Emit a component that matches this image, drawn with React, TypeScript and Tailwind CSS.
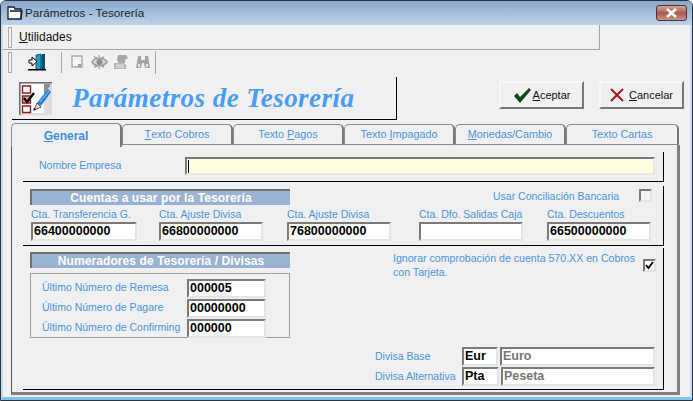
import type { ReactNode } from "react";

const LABEL = "text-[10.5px] leading-[14px] text-[#4a94d8] whitespace-nowrap";

function Grip() {
  return <div className="ml-[5px] h-[21px] w-[4px] shrink-0 border border-[#a8a8a8] bg-[#f4f4f4]" />;
}

/** Sunken win32 edit box: dark top/left, pale bottom/right. */
function Field({ value, className = "", muted = false }: { value?: string; className?: string; muted?: boolean }) {
  return (
    <div
      className={`flex h-[19px] shrink-0 items-center border-2 border-t-[#7a7a7a] border-l-[#7a7a7a] border-r-[#e4e4e4] border-b-[#e4e4e4] bg-white pl-[1px] text-[12.5px] font-bold leading-none ${
        muted ? "text-[#777777]" : "text-black"
      } ${className}`}
    >
      {value}
    </div>
  );
}

function Band({ children, className = "" }: { children: ReactNode; className?: string }) {
  return (
    <div
      className={`flex h-[16px] w-[260px] shrink-0 items-center justify-center border-l-2 border-t-2 border-l-[#707070] border-t-[#707070] bg-[#9ab3d2] text-[12px] font-bold leading-none tracking-[0.1px] text-white ${className}`}
    >
      {children}
    </div>
  );
}

function Tab({ before = "", u, rest, active = false, width }: { before?: string; u: string; rest: string; active?: boolean; width: string }) {
  return (
    <div
      className={`flex shrink-0 items-center justify-center whitespace-pre rounded-t-[5px] border-l border-t border-r-2 border-l-[#8a8a8a] border-t-[#8a8a8a] border-r-[#777777] leading-none ${width} ${
        active
          ? "z-10 h-[24px] bg-[#f0f0f2] text-[12px] font-bold text-[#3f8fd8]"
          : "mt-[1px] h-[21px] border-b border-b-[#8a8a8a] text-[10.8px] text-[#4a94d8]"
      }`}
    >
      <span>{before}</span>
      <span className="underline">{u}</span>
      <span>{rest}</span>
    </div>
  );
}

function Door() {
  return (
    <svg width="18" height="18" viewBox="0 0 18 18" className="ml-[16px] shrink-0">
      <path d="M8 2h8v14H8z" fill="#1b7f9c" />
      <path d="M8 2l5-1v15l-5 1z" fill="#1a9cc4" stroke="#0b3d4d" strokeWidth="0.7" />
      <path d="M14 1h3v15h-3z" fill="#0d4f63" />
      <path d="M1 7h3V4l5 4.5L4 13v-3H1z" fill="#fff" stroke="#000" strokeWidth="1" />
      <path d="M0 16h18v1.5H0z" fill="#000" />
    </svg>
  );
}

function DisabledIcons() {
  return (
    <div className="flex items-center">
      <svg width="12" height="14" viewBox="0 0 12 14" className="ml-[9px]">
        <path d="M1 1h10v11H1z" fill="#f4f4f4" stroke="#a9a9a9" strokeWidth="1.4" />
        <path d="M7 9h3v3H7z" fill="#9a9a9a" />
      </svg>
      <svg width="17" height="16" viewBox="0 0 17 16" className="ml-[8px]">
        <path d="M1 8c3-5 12-5 15 0-3 5-12 5-15 0z" fill="#d8d8d8" stroke="#9c9c9c" strokeWidth="1.6" />
        <circle cx="8.5" cy="8" r="3" fill="#8f8f8f" />
        <path d="M3 3l3 1M8 1v2M13 3l-2 1M3 13l3-1M8 15v-2M13 13l-2-1" stroke="#a5a5a5" strokeWidth="1.4" />
      </svg>
      <svg width="16" height="16" viewBox="0 0 16 16" className="ml-[5px]">
        <path d="M5 1h8l2 3-3 2v3H6L4 6z" fill="#a6a6a6" />
        <path d="M1 9h10l2 2v4H1z" fill="#b4b4b4" />
        <path d="M3 11h8M3 13h8" stroke="#e8e8e8" strokeWidth="1" />
      </svg>
      <svg width="16" height="15" viewBox="0 0 16 15" className="ml-[6px]">
        <path d="M3 1h3v4h4V1h3l2 12h-5l-1-5H7l-1 5H1z" fill="#a3a3a3" />
        <path d="M3 9h2v3H3zM11 9h2v3h-2z" fill="#e6e6e6" />
      </svg>
    </div>
  );
}

function ChecklistIcon() {
  return (
    <svg width="33" height="33" viewBox="0 0 33 33" className="shrink-0">
      <path d="M0 0h33v33H0z" fill="#6e6e6e" />
      <path d="M1.5 1.5H33V33H1.5z" fill="#dcdcdc" />
      <path d="M2 2h23v29H2z" fill="#fff" />
      <path d="M25 2h6v2L25 12z" fill="#8c8c8c" />
      <path d="M3.5 4h8v7h-8zM3.5 24h8v6.5h-8z" fill="#fff" stroke="#8c1c1c" strokeWidth="1.4" />
      <path d="M3.5 14h8v7h-8z" fill="#d9b5b5" stroke="#8c1c1c" strokeWidth="1.4" />
      <path d="M5 16l3 4 7-9" fill="none" stroke="#000" strokeWidth="2.5" />
      <path d="M18 21L29 7l3 3-10 14z" fill="#2a7de0" />
      <path d="M21 20l9-11" stroke="#9cc8f5" strokeWidth="1" />
      <path d="M18 21l4 4-7 3z" fill="#e8d8b8" stroke="#333" strokeWidth="0.8" />
      <path d="M15 26l-1 2.5 3-1z" fill="#000" />
    </svg>
  );
}

function Account({ label, value, width = "w-[104px]" }: { label: string; value?: string; width?: string }) {
  return (
    <div>
      <div className={LABEL}>{label}</div>
      <Field value={value} className={`mt-[1px] ${width}`} />
    </div>
  );
}

function Counter({ label, value }: { label: string; value: string }) {
  return (
    <div className="flex h-[20px] items-center">
      <span className={`${LABEL} -mt-[3px] w-[156px] pl-[11px]`}>{label}</span>
      <Field value={value} className="w-[79px]" />
    </div>
  );
}

export default function App() {
  return (
    <div
      className="flex h-[401px] w-[693px] flex-col overflow-hidden rounded-t-[6px] border border-[#2c3440] bg-[#f0f0f2] text-[12px]"
      style={{ fontFamily: '"Liberation Sans", Arial, sans-serif' }}
    >
      {/* title bar */}
      <div className="flex h-[24px] shrink-0 items-center bg-gradient-to-b from-[#8aa8cb] to-[#bcd3e9] pl-[6px] pr-[5px]">
        <svg width="16" height="14" viewBox="0 0 16 14" className="shrink-0">
          <path d="M1 1h6l1 2h6v10H1z" fill="#fff" stroke="#10202c" strokeWidth="1.3" />
          <path d="M3 5h12l-1 8" fill="none" stroke="#10202c" strokeWidth="1.3" />
        </svg>
        <span className="ml-[2px] text-[11.7px] leading-none text-[#1a2430]">Parámetros - Tesorería</span>
        <div className="ml-auto flex h-[16px] w-[31px] items-center justify-center rounded-[3px] border border-[#4a3430] bg-gradient-to-b from-[#d9a79d] via-[#a65a4e] to-[#c99488]">
          <svg width="13" height="10" viewBox="0 0 13 10">
            <path d="M2 1l9 8M11 1l-9 8" stroke="#fff" strokeWidth="2.6" />
          </svg>
        </div>
      </div>

      <div className="flex min-h-0 flex-1 flex-col border-x-2 border-b-[3px] border-x-[#c5dcf0] border-b-[#7fc4e4] bg-[#f0f0f2]">
        {/* menu */}
        <div className="flex h-[25px] w-[597px] shrink-0 items-center border-b border-r border-[#a5a5a5]">
          <Grip />
          <span className="ml-[7px] text-[12px] leading-none text-[#111111]">
            <span className="underline">U</span>tilidades
          </span>
        </div>

        {/* toolbar */}
        <div className="flex h-[24px] shrink-0 items-center">
          <Grip />
          <Door />
          <div className="ml-[15px] h-[21px] w-px bg-[#a5a5a5]" />
          <DisabledIcons />
          <div className="ml-[4px] h-[23px] w-px bg-[#a5a5a5]" />
        </div>

        {/* heading + actions */}
        <div className="mt-[3px] flex h-[43px] shrink-0 items-start">
          <div className="ml-[9px] flex h-[43px] w-[385px] items-center border-b border-r border-black pl-[7px]">
            <ChecklistIcon />
            <span
              className="ml-[20px] whitespace-nowrap text-[27px] font-bold italic leading-none tracking-[0.45px] text-[#4a9cf2]"
              style={{ fontFamily: '"Liberation Serif", "Times New Roman", serif' }}
            >
              Parámetros de Tesorería
            </span>
          </div>
          <div className="ml-[102px] mt-[4px] flex h-[28px] w-[85px] items-center justify-center border-2 border-t-[#f8f8f8] border-l-[#f8f8f8] border-r-[#777777] border-b-[#777777] text-[11px] text-[#111111]">
            <svg width="19" height="15" viewBox="0 0 19 15" className="mr-[1px]">
              <path d="M1 8l3-3 3 4 9-9 2 2L7 15z" fill="#0f4a1e" />
            </svg>
            <span className="underline">A</span>ceptar
          </div>
          <div className="ml-[15px] mt-[4px] flex h-[28px] w-[85px] items-center justify-center border-2 border-t-[#f8f8f8] border-l-[#f8f8f8] border-r-[#777777] border-b-[#777777] text-[11px] text-[#111111]">
            <svg width="14" height="14" viewBox="0 0 14 14" className="mr-[5px]">
              <path d="M1 1l12 12M13 1L1 13" stroke="#a01818" strokeWidth="2" />
            </svg>
            <span className="underline">C</span>ancelar
          </div>
        </div>

        {/* tabs */}
        <div className="ml-[8px] mt-[3px] flex h-[22px] shrink-0 items-start">
          <Tab u="G" rest="eneral" active width="w-[111px]" />
          <Tab u="T" rest="exto Cobros" width="w-[111px]" />
          <Tab before="Texto " u="P" rest="agos" width="w-[111px]" />
          <Tab before="Texto " u="I" rest="mpagado" width="w-[111px]" />
          <Tab u="M" rest="onedas/Cambio" width="w-[111px]" />
          <Tab before="Texto Cartas" u="" rest="" width="w-[113px]" />
        </div>

        {/* tab page */}
        <div className="ml-[8px] h-[250px] w-[669px] shrink-0 border-b-[3px] border-l border-r-[3px] border-b-[#808080] border-l-[#555555] border-r-[#808080] pl-[11px] pt-[7px]">
          <div className="flex h-[30px] w-[641px] items-start border-b border-r border-black pt-[5px]">
            <span className={`${LABEL} ml-[16px] mt-[1px] w-[146px]`}>Nombre Empresa</span>
            <div className="flex h-[18px] w-[470px] items-center border-2 border-t-[#7a7a7a] border-l-[#7a7a7a] border-r-[#e8e8e8] border-b-[#e8e8e8] bg-[#ffffe1]">
              <div className="ml-[1px] h-[13px] w-px bg-black" />
            </div>
          </div>

          <div className="mt-[4px] h-[60px] w-[641px] border-b border-r border-black pl-[7px]">
            <div className="flex h-[20px] items-start">
              <Band className="mt-[3px]">Cuentas a usar por la Tesorería</Band>
              <span className={`${LABEL} ml-[203px] mt-[3px]`}>Usar Conciliación Bancaria</span>
              <div className="ml-auto mr-[11px] mt-[3px] h-[13px] w-[13px] shrink-0 border-2 border-t-[#7a7a7a] border-l-[#7a7a7a] border-r-[#e4e4e4] border-b-[#e4e4e4] bg-[#f4f4f4]" />
            </div>
            <div className="mt-[1px] grid grid-cols-[128px_128px_132px_128px_104px] pl-[1px]">
              <Account label="Cta. Transferencia G." value="66400000000" width="w-[106px]" />
              <Account label="Cta. Ajuste Divisa" value="66800000000" />
              <Account label="Cta. Ajuste Divisa" value="76800000000" />
              <Account label="Cta. Dfo. Salidas Caja" />
              <Account label="Cta. Descuentos" value="66500000000" />
            </div>
          </div>

          <div className="mt-[2px] h-[142px] w-[641px] border-b border-r border-black pl-[7px] pt-[4px]">
            <div className="flex items-start">
              <div className="w-[260px] shrink-0">
                <Band>Numeradores de Tesorería / Divisas</Band>
                <div className="mt-[5px] h-[65px] w-[260px] border border-[#a0a0a0] pt-[4px]">
                  <Counter label="Último Número de Remesa" value="000005" />
                  <Counter label="Último Número de Pagare" value="00000000" />
                  <Counter label="Último Número de Confirming" value="000000" />
                </div>
              </div>
              <div className="-mt-[1px] ml-[103px] w-[246px] text-[10.6px] leading-[14px] text-[#4a94d8]">
                Ignorar comprobación de cuenta 570.XX en Cobros con Tarjeta.
              </div>
              <div className="ml-[4px] mt-[7px] flex h-[13px] w-[13px] shrink-0 items-center justify-center border-2 border-t-[#7a7a7a] border-l-[#7a7a7a] border-r-[#e4e4e4] border-b-[#e4e4e4] bg-white">
                <svg width="9" height="9" viewBox="0 0 9 9">
                  <path d="M1 4l2.5 3L8 1" fill="none" stroke="#000" strokeWidth="1.8" />
                </svg>
              </div>
            </div>
            <div className="ml-[345px] mt-[8px] flex h-[20px] items-center">
              <span className={`${LABEL} -mt-[1px] w-[87px]`}>Divisa Base</span>
              <Field value="Eur" className="w-[36px]" />
              <Field value="Euro" muted className="ml-[2px] w-[155px]" />
            </div>
            <div className="ml-[345px] flex h-[20px] items-center">
              <span className={`${LABEL} -mt-[1px] w-[87px]`}>Divisa Alternativa</span>
              <Field value="Pta" className="w-[37px]" />
              <Field value="Peseta" muted className="ml-[2px] w-[154px]" />
            </div>
          </div>
        </div>
      </div>
    </div>
  );
}
